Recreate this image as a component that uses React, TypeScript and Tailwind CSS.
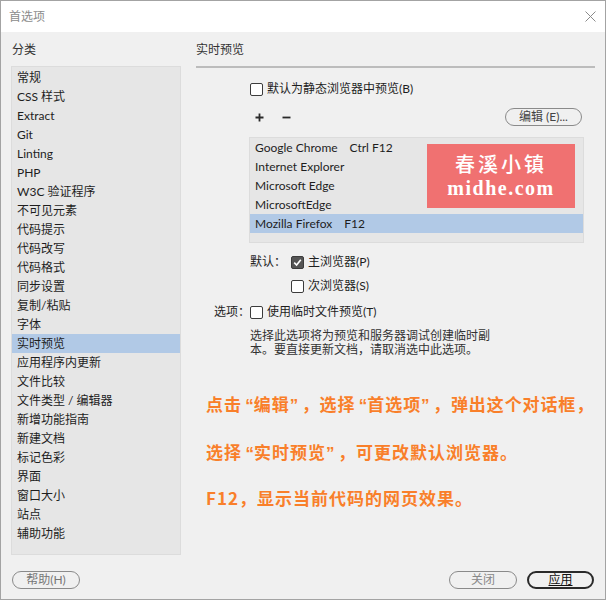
import React from "react";

const categories = [
  "常规",
  "CSS 样式",
  "Extract",
  "Git",
  "Linting",
  "PHP",
  "W3C 验证程序",
  "不可见元素",
  "代码提示",
  "代码改写",
  "代码格式",
  "同步设置",
  "复制/粘贴",
  "字体",
  "实时预览",
  "应用程序内更新",
  "文件比较",
  "文件类型 / 编辑器",
  "新增功能指南",
  "新建文档",
  "标记色彩",
  "界面",
  "窗口大小",
  "站点",
  "辅助功能",
];

const browsers = [
  { name: "Google Chrome", key: "Ctrl F12" },
  { name: "Internet Explorer", key: "" },
  { name: "Microsoft Edge", key: "" },
  { name: "MicrosoftEdge", key: "" },
  { name: "Mozilla Firefox", key: "F12" },
];

const Checkbox = ({ checked = false }: { checked?: boolean }) => (
  <span
    className={
      checked
        ? "w-[13px] h-[13px] rounded-[2px] border border-[#3c3c3c] bg-[#555] flex items-center justify-center shrink-0"
        : "w-[13px] h-[13px] rounded-[2px] border border-[#3c3c3c] bg-white shrink-0"
    }
  >
    {checked && (
      <svg width="9" height="9" viewBox="0 0 9 9">
        <path d="M1.2 4.6 L3.6 7 L7.8 1.8" stroke="#fff" strokeWidth="1.6" fill="none" />
      </svg>
    )}
  </span>
);

// quote marks in the note are narrower than a full CJK cell
const Open = () => (
  <span
    className="inline-block w-[12px] text-right tracking-normal"
    style={{ fontFamily: '"Liberation Sans", sans-serif' }}
  >
    “
  </span>
);
const Close = () => (
  <span
    className="inline-block w-[12px] text-left tracking-normal"
    style={{ fontFamily: '"Liberation Sans", sans-serif' }}
  >
    ”
  </span>
);

const App = () => {
  return (
    <div
      className="w-[606px] h-[600px] border border-[#a3a3a3] bg-[#f0f0f0] flex flex-col text-[12px] text-[#1e1e1e]"
      style={{ fontFamily: 'Lato, "Noto Sans CJK SC", sans-serif' }}
    >
      {/* title bar */}
      <div className="h-[31px] bg-white flex items-center justify-between pl-[8px] pr-[9px] shrink-0">
        <span className="text-[#8c8c8c] text-[12px]">首选项</span>
        <svg width="11" height="11" viewBox="0 0 11 11">
          <path d="M0.5 0.5 L10.5 10.5 M10.5 0.5 L0.5 10.5" stroke="#8a8a8a" strokeWidth="1" />
        </svg>
      </div>

      <div className="flex px-[10px] pt-[9px] gap-[15px]">
        {/* left column */}
        <div className="w-[170px] flex flex-col">
          <div className="h-[18px] leading-[18px] pl-[1px] text-[#333]">分类</div>
          <div className="mt-[7px] h-[489px] border border-[#dcdcdc] bg-[#e6e6e6] pt-px">
            {categories.map((c) => (
              <div
                key={c}
                className={
                  c === "实时预览"
                    ? "h-[19px] leading-[19px] pl-[5px] bg-[#b1c9e6]"
                    : "h-[19px] leading-[19px] pl-[5px]"
                }
              >
                {c}
              </div>
            ))}
          </div>
        </div>

        {/* right column */}
        <div className="w-[399px] flex flex-col">
          <div className="h-[18px] leading-[18px] text-[#333]">实时预览</div>
          <div className="mt-[7px] h-[2px] bg-[#bcbcbc]" />

          <div className="mt-[12px] h-[18px] flex items-center pl-[54px] gap-[4px]">
            <Checkbox />
            <span>默认为静态浏览器中预览(B)</span>
          </div>

          <div className="mt-[10px] h-[18px] flex items-center justify-between pr-[13px]">
            <div className="flex items-center pl-[59px] gap-[18px]">
              <svg width="9" height="9" viewBox="0 0 9 9">
                <path d="M4.5 0.5 V8.5 M0.5 4.5 H8.5" stroke="#2a2a2a" strokeWidth="1.8" />
              </svg>
              <svg width="9" height="9" viewBox="0 0 9 9">
                <path d="M0.5 4.5 H8.5" stroke="#2a2a2a" strokeWidth="1.8" />
              </svg>
            </div>
            <button className="w-[77px] h-[18px] rounded-full border border-[#8a8a8a] bg-[#f0f0f0] text-[12px] text-[#444] leading-[16px]">
              编辑 (E)...
            </button>
          </div>

          <div className="relative mt-[11px] ml-[53px] w-[335px] h-[106px] border border-[#dcdcdc] bg-[#e6e6e6]">
            {browsers.map((b) => (
              <div
                key={b.name}
                className={
                  b.name === "Mozilla Firefox"
                    ? "h-[19px] leading-[19px] pl-[5px] bg-[#b1c9e6] flex"
                    : "h-[19px] leading-[19px] pl-[5px] flex"
                }
              >
                <span>{b.name}</span>
                {b.key && <span className="ml-[12px]">{b.key}</span>}
              </div>
            ))}
            <div className="absolute left-[177px] top-[6px] w-[148px] h-[64px] bg-[#f07171] flex flex-col items-center justify-center text-white">
              <span
                className="text-[20px] leading-[24px] tracking-[3px] font-medium"
                style={{ fontFamily: '"Noto Sans CJK SC", sans-serif' }}
              >
                春溪小镇
              </span>
              <span
                className="text-[20px] leading-[24px] tracking-[1.5px] font-bold"
                style={{ fontFamily: '"Liberation Serif", serif' }}
              >
                midhe.com
              </span>
            </div>
          </div>

          <div className="mt-[10px] h-[18px] flex items-center pl-[54px]">
            <span className="w-[41px]">默认：</span>
            <Checkbox checked />
            <span className="ml-[4px]">主浏览器(P)</span>
          </div>
          <div className="mt-[6px] h-[18px] flex items-center pl-[95px]">
            <Checkbox />
            <span className="ml-[4px]">次浏览器(S)</span>
          </div>
          <div className="mt-[8px] h-[18px] flex items-center pl-[18px]">
            <span className="w-[36px]">选项：</span>
            <Checkbox />
            <span className="ml-[4px]">使用临时文件预览(T)</span>
          </div>

          <div className="mt-[8px] pl-[54px] leading-[14px] text-[#333]">
            <div>选择此选项将为预览和服务器调试创建临时副</div>
            <div>本。要直接更新文档，请取消选中此选项。</div>
          </div>

          <div
            className="pl-[10px] text-[17px] font-bold text-[#f97f2a] leading-[24px] tracking-[0.9px] whitespace-nowrap"
            style={{ fontFamily: '"Noto Sans CJK SC", sans-serif' }}
          >
            <div className="mt-[35px]">
              点击<Open />编辑<Close />，选择<Open />首选项<Close />，弹出这个对话框，
            </div>
            <div className="mt-[22px] tracking-[1px]">
              选择<Open />实时预览<Close />，可更改默认浏览器。
            </div>
            <div className="mt-[20px] tracking-[1px]">F12，显示当前代码的网页效果。</div>
          </div>
        </div>
      </div>

      {/* bottom buttons */}
      <div className="mt-[16px] h-[18px] flex items-center justify-between px-[11px]">
        <button className="w-[68px] h-[18px] rounded-full border border-[#8a8a8a] text-[#777] leading-[16px] text-[12px]">
          帮助(H)
        </button>
        <div className="flex gap-[10px]">
          <button className="w-[68px] h-[18px] rounded-full border border-[#8a8a8a] text-[#888] leading-[16px] text-[12px]">
            关闭
          </button>
          <button className="w-[67px] h-[18px] rounded-full border-2 border-[#2a2a2a] text-[#111] leading-[14px] text-[12px]">
            <span className="underline">应用</span>
          </button>
        </div>
      </div>
    </div>
  );
};

export default App;
